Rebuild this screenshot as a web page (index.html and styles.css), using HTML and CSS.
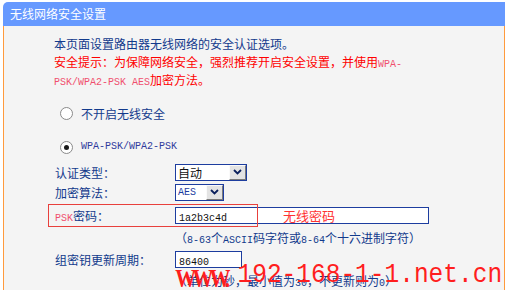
FILE: index.html
```html
<!DOCTYPE html>
<html lang="zh-CN">
<head>
  <meta charset="UTF-8">
  <title>无线网络安全设置</title>
  <link rel="stylesheet" href="styles.css">
</head>
<body>
  <div class="panel">
    <div class="panel-head">无线网络安全设置</div>

    <div class="panel-body">
      <!-- intro -->
      <div class="line">本页面设置路由器无线网络的安全认证选项。</div>
      <div class="line warn">安全提示：为保障网络安全，强烈推荐开启安全设置，并使用<span class="en pink">WPA-</span></div>
      <div class="line warn"><span class="en pink">PSK/WPA2-PSK AES</span>加密方法。</div>

      <!-- security mode -->
      <div class="radio-row first">
        <span class="radio"></span>
        <span>不开启无线安全</span>
      </div>
      <div class="radio-row second">
        <span class="radio checked"></span>
        <span class="en">WPA-PSK/WPA2-PSK</span>
      </div>

      <div class="field">
        <span class="label">认证类型：</span>
        <div class="select wide">
          <span class="select-text">自动</span>
          <span class="select-btn">
            <svg width="9" height="6" viewBox="0 0 9 6"><path d="M1 1 L4.5 4.5 L8 1" fill="none" stroke="#0a1f5c" stroke-width="1.8"/></svg>
          </span>
        </div>
      </div>
      <div class="field">
        <span class="label">加密算法：</span>
        <div class="select narrow">
          <span class="select-text en">AES</span>
          <span class="select-btn">
            <svg width="9" height="6" viewBox="0 0 9 6"><path d="M1 1 L4.5 4.5 L8 1" fill="none" stroke="#0a1f5c" stroke-width="1.8"/></svg>
          </span>
        </div>
      </div>

      <div class="field psk">
        <span class="label"><span class="en pink">PSK</span>密码：</span>
        <div class="input long"><span class="en">1a2b3c4d</span></div>
        <span class="mark-box"></span>
        <span class="mark-text">无线密码</span>
      </div>
      <div class="hint">（<span class="en">8-63</span>个<span class="en">ASCII</span>码字符或<span class="en">8-64</span>个十六进制字符）</div>

      <div class="field group">
        <span class="label">组密钥更新周期：</span>
        <div class="input short"><span class="en">86400</span></div>
      </div>
      <div class="hint last">（单位为秒，最小值为<span class="en">30</span>，不更新则为<span class="en">0</span>）</div>

      <div class="watermark"><span class="www">WWW.</span><span class="site">192-168-1-1.net.cn</span></div>
    </div>
  </div>
</body>
</html>
```

FILE: styles.css
```css
/* router settings panel */
body {
  margin: 0;
  background-color: #fff;
  font-family: "Noto Sans CJK SC", sans-serif;
  font-size: 12px;
  color: #123a8c;
  overflow: hidden;
}
.panel {
  width: 502px;
  margin: 2px 0 0 3px;
}
.panel-head {
  height: 24px;
  line-height: 24px;
  padding-left: 7px;
  background-color: #6699ff;
  color: #fff;
  font-size: 12px;
  border-top-left-radius: 5px;
}
.panel-body {
  position: relative;
  height: 264px;
  overflow: hidden;
  padding: 9px 0 0 50px;
  box-sizing: border-box;
  background-color: #f4f4f4;
  border-left: 1px solid #ff9a3c;
  border-right: 1px solid #ff9a3c;
}
.line {
  height: 18px;
  line-height: 18px;
  white-space: nowrap;
}
.warn {
  color: #ff0000;
}
.en {
  font-family: "Liberation Mono", monospace;
  font-size: 10px;
  line-height: 1;
}
.pink {
  color: #f0506e;
}
.radio-row {
  display: flex;
  align-items: center;
  height: 18px;
  padding-left: 6px;
  gap: 8px;
}
.radio-row.first {
  margin-top: 15px;
}
.radio-row.second {
  margin-top: 16px;
  color: #2f3a9c;
}
.radio {
  width: 11px;
  height: 11px;
  border: 1px solid #8a8a8a;
  border-radius: 50%;
  background-color: #fff;
  display: flex;
  align-items: center;
  justify-content: center;
}
.radio.checked::after {
  content: "";
  width: 5px;
  height: 5px;
  border-radius: 50%;
  background-color: #1a1a1a;
}
.field {
  position: relative;
  display: flex;
  align-items: center;
  height: 20px;
  padding-left: 1px;
}
.radio-row.second + .field {
  margin-top: 6px;
}
.label {
  width: 120px;
  flex-shrink: 0;
}
.select {
  display: flex;
  height: 17px;
  box-sizing: border-box;
  border: 1px solid #1d3d9f;
  background-color: #fff;
  color: #111;
}
.select.wide {
  width: 72px;
}
.select.narrow {
  width: 49px;
}
.select-text {
  flex: 1;
  line-height: 15px;
  padding-left: 2px;
}
.select-text.en {
  font-size: 10px;
  line-height: 15px;
  color: #1d3d9f;
}
.select-btn {
  width: 17px;
  box-sizing: border-box;
  display: flex;
  align-items: center;
  justify-content: center;
  background-color: #e3e3e3;
  border: 1px solid;
  border-color: #fafafa #7a7a7a #7a7a7a #fafafa;
}
.input {
  height: 17px;
  box-sizing: border-box;
  border: 1px solid #1d3d9f;
  background-color: #fff;
  line-height: 15px;
  padding-left: 3px;
  color: #111;
}
.input .en {
  line-height: 15px;
}
.input.long {
  width: 254px;
}
.input.short {
  width: 67px;
}
.field.psk {
  height: 27px;
}
.mark-box {
  position: absolute;
  left: -6px;
  top: 2px;
  width: 210px;
  height: 23px;
  box-sizing: border-box;
  border: 1px solid #e8403c;
}
.mark-text {
  position: absolute;
  left: 229px;
  top: 4px;
  color: #ff3333;
  font-size: 13px;
}
.hint {
  height: 17px;
  line-height: 17px;
  padding-left: 121px;
  white-space: nowrap;
}
.field.group {
  height: 18px;
  margin-top: 4px;
}
.hint.last {
  margin-top: 4px;
}
.watermark {
  position: absolute;
  left: 170px;
  top: 235px;
  color: #ff1e1e;
  white-space: nowrap;
  display: flex;
  align-items: baseline;
}
.www {
  font-family: "Liberation Serif", serif;
  font-weight: bold;
  font-size: 22px;
  letter-spacing: -4px;
  display: inline-block;
  transform: translateY(5px) scale(0.95, 1.1);
  margin-right: 10px;
}
.site {
  font-family: "Liberation Mono", monospace;
  font-size: 24.5px;
  display: inline-block;
  transform: scaleY(1.15);
}
```
